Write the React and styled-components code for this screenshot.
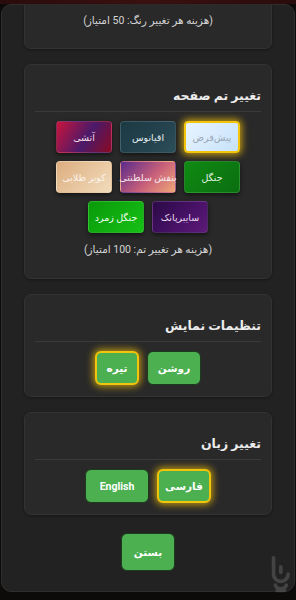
import React from "react"
import styled, { createGlobalStyle, css } from "styled-components"

const GlobalStyle = createGlobalStyle`
  html, body {
    margin: 0;
    padding: 0;
    background: #0e0808;
    font-family: Roboto, "DejaVu Sans", sans-serif;
  }
  #root {
    min-height: 600px;
  }
`

const themes = [
  { name: "پیش‌فرض", bg: "linear-gradient(135deg, #e8f4ff, #c6e2fb)", color: "#9aa6b2", active: true },
  { name: "اقیانوس", bg: "linear-gradient(135deg, #1b3a44, #24434e 60%, #2c4f5a)", color: "#e6eef0" },
  { name: "آتشی", bg: "linear-gradient(120deg, #c8143c, #4a1a6a 55%, #8a0a24)", color: "#f2dce4" },
  { name: "جنگل", bg: "linear-gradient(135deg, #0f8a12, #0b6e10)", color: "#e8f5e8" },
  { name: "بنفش سلطنتی", bg: "linear-gradient(135deg, #5a2a8a, #c8607a 55%, #f0a878)", color: "#f6e6ee" },
  { name: "کویر طلایی", bg: "linear-gradient(135deg, #dcae80, #f2dcbc)", color: "#fbf3ea" },
  { name: "سایبرپانک", bg: "linear-gradient(135deg, #2a0a46, #4a1268 60%, #5c1a78)", color: "#eadcf2" },
  { name: "جنگل زمرد", bg: "linear-gradient(135deg, #0a9a0a, #16c016)", color: "#f0fff0" },
]

export default function App() {
  return (
    <>
      <GlobalStyle />
      <Screen>
        <TopStrip />
        <Panel dir="rtl">
          <Card $cut>
            <Note>(هزینه هر تغییر رنگ: 50 امتیاز)</Note>
          </Card>

          <Card $pb={20}>
            <Title>تغییر تم صفحه</Title>
            <Divider />
            <ThemeGrid>
              {themes.map((t) => (
                <ThemeButton key={t.name} $bg={t.bg} $color={t.color} $active={t.active}>
                  {t.name}
                </ThemeButton>
              ))}
            </ThemeGrid>
            <Note>(هزینه هر تغییر تم: 100 امتیاز)</Note>
          </Card>

          <Card>
            <Title>تنظیمات نمایش</Title>
            <Divider />
            <ButtonRow>
              <GreenButton $w={54}>روشن</GreenButton>
              <GreenButton $w={44} $active>تیره</GreenButton>
            </ButtonRow>
          </Card>

          <Card>
            <Title>تغییر زبان</Title>
            <Divider />
            <ButtonRow>
              <GreenButton $w={54} $active>فارسی</GreenButton>
              <GreenButton $w={64}>English</GreenButton>
            </ButtonRow>
          </Card>

          <CloseRow>
            <GreenButton $w={54} $h={38}>بستن</GreenButton>
          </CloseRow>
        </Panel>
        <Watermark viewBox="0 0 24 44">
          <path
            d="M6 2 v18 a8 8 0 0 0 16 0 M14 12 v6 M8 32 a6 4 0 0 0 12 0 M10 38 h8"
            fill="none"
            stroke="#5a5a5a"
            strokeWidth="4"
            strokeLinecap="round"
          />
        </Watermark>
      </Screen>
    </>
  )
}

const Screen = styled.div`
  position: relative;
  width: 296px;
  height: 600px;
  overflow: hidden;
  background: #0d0a0a;
`

const TopStrip = styled.div`
  height: 4px;
  background: linear-gradient(90deg, #2a0c0c, #3a1010 50%, #2a0c0c);
`

const Panel = styled.div`
  margin: 0 1px;
  height: 588px;
  box-sizing: border-box;
  padding: 0 22px;
  background: #222222;
  border: 1px solid #2e2e2e;
  border-radius: 10px;
  display: flex;
  flex-direction: column;
  gap: 15px;
`

const Card = styled.div`
  background: #292929;
  border: 1px solid #333333;
  border-radius: 7px;
  padding: 10px 10px ${(p) => p.$pb || 11}px;
  box-shadow: 0 1px 3px rgba(0, 0, 0, 0.35);
  ${(p) =>
    p.$cut &&
    css`
      border-top: none;
      border-radius: 0 0 7px 7px;
      padding: 8px 10px 19px;
    `}
`

const Title = styled.div`
  color: #ececec;
  font-size: 12.5px;
  font-weight: 700;
  padding: 13px 0 8px;
`

const Divider = styled.div`
  height: 1px;
  background: #3a3a3a;
  margin-bottom: 9px;
`

const Note = styled.div`
  text-align: center;
  color: #d4d4d4;
  font-size: 10.5px;
  line-height: 16px;
`

const ThemeGrid = styled.div`
  display: flex;
  flex-wrap: wrap;
  justify-content: center;
  gap: 8px 8px;
  padding: 0 21px;
  margin-bottom: 9px;
`

const ThemeButton = styled.div`
  width: 56px;
  height: 32px;
  box-sizing: border-box;
  display: flex;
  align-items: center;
  justify-content: center;
  font-size: 9.5px;
  white-space: nowrap;
  border-radius: 4px;
  background: ${(p) => p.$bg};
  color: ${(p) => p.$color};
  border: 1px solid rgba(255, 255, 255, 0.12);
  box-shadow: 0 2px 4px rgba(0, 0, 0, 0.5);
  ${(p) =>
    p.$active &&
    css`
      border: 2px solid #f2c40c;
      box-shadow: 0 0 7px 2px rgba(240, 190, 10, 0.75);
    `}
`

const ButtonRow = styled.div`
  display: flex;
  justify-content: center;
  gap: 8px;
`

const GreenButton = styled.div`
  width: ${(p) => p.$w}px;
  height: ${(p) => p.$h || 34}px;
  box-sizing: border-box;
  display: flex;
  align-items: center;
  justify-content: center;
  background: #4caf50;
  color: #ffffff;
  font-size: 10.5px;
  font-weight: 700;
  border-radius: 6px;
  border: 1px solid #1c3a1c;
  ${(p) =>
    p.$active &&
    css`
      border: 2px solid #f2c40c;
      box-shadow: 0 0 7px 2px rgba(240, 190, 10, 0.7);
    `}
`

const CloseRow = styled.div`
  display: flex;
  justify-content: center;
  padding-top: 3px;
`

const Watermark = styled.svg`
  position: absolute;
  right: 6px;
  bottom: 4px;
  width: 22px;
  height: 40px;
  opacity: 0.6;
`
